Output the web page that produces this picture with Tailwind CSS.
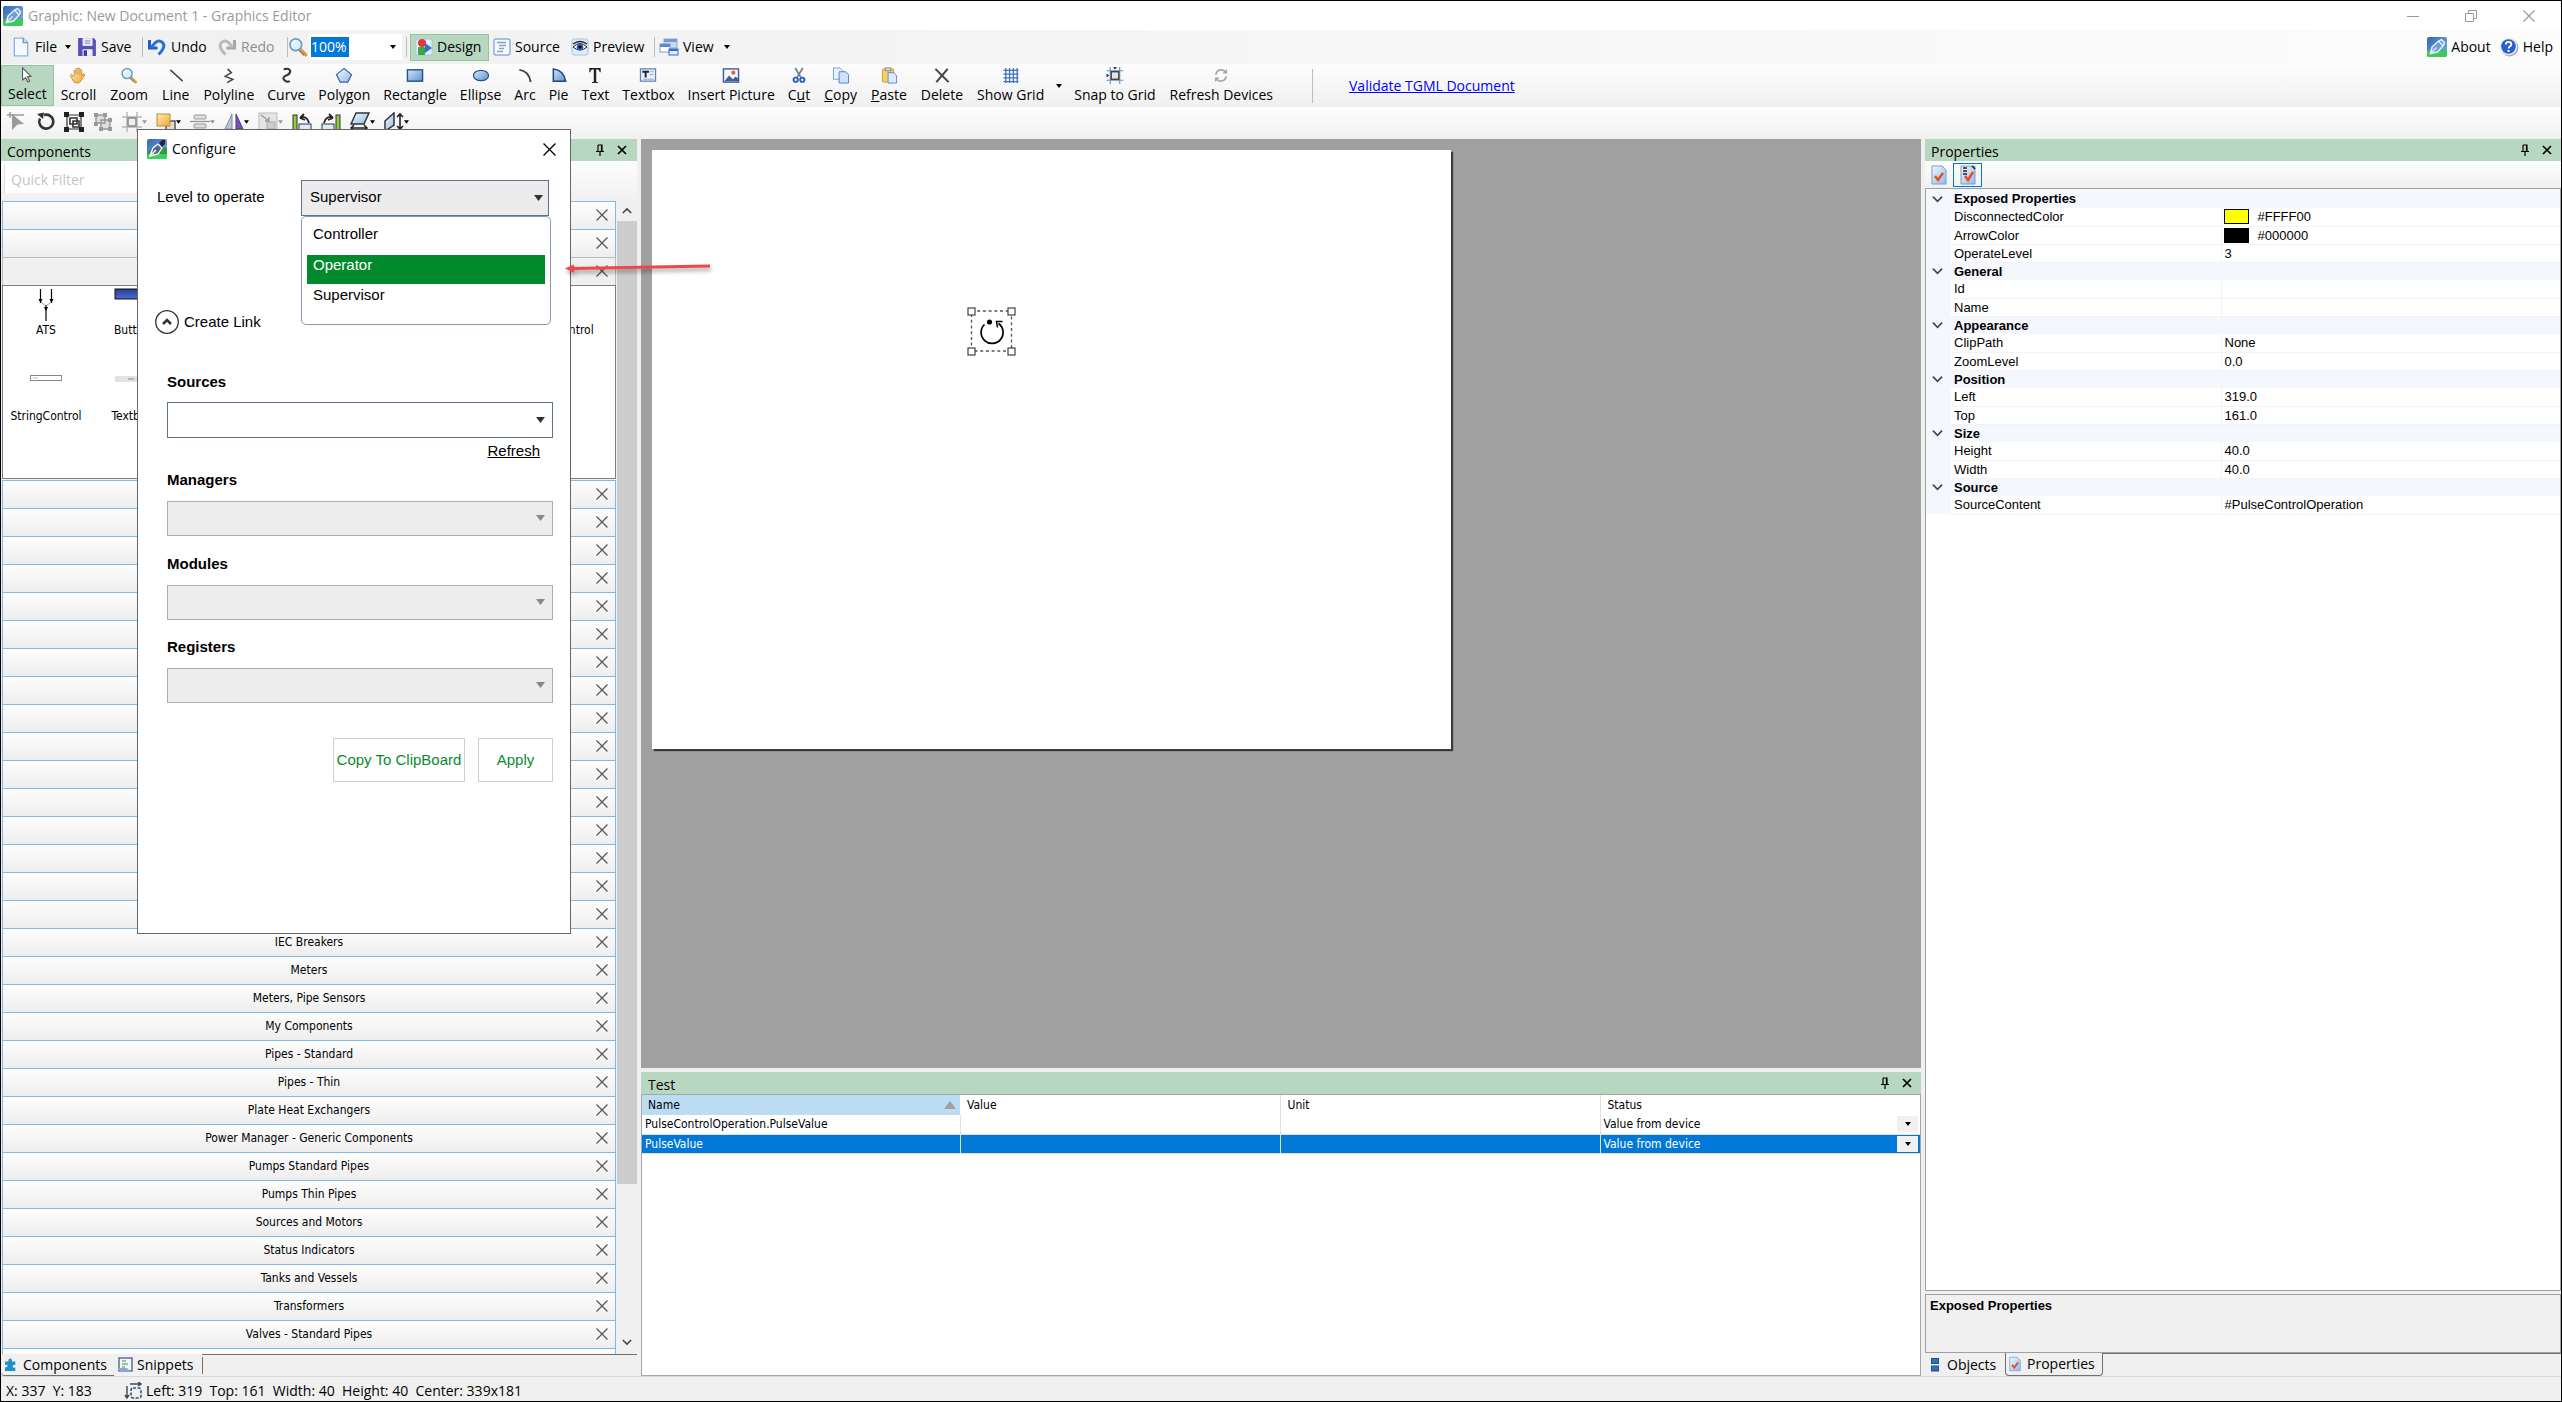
<!DOCTYPE html>
<html lang="en">
<head>
<meta charset="utf-8">
<title>Graphic: New Document 1 - Graphics Editor</title>
<script src="https://cdn.jsdelivr.net/npm/@tailwindcss/browser@4"></script>
</head>
<body class="h-screen flex flex-col border border-black bg-[#f0f0f0] font-['Open_Sans',sans-serif] text-sm leading-5 text-black overflow-hidden">

<svg class="absolute size-0" aria-hidden="true">
  <defs>
    <linearGradient id="gBlue" x1="0" y1="0" x2="1" y2="1"><stop offset="0" stop-color="#f2f9ff"/><stop offset="1" stop-color="#8db9ea"/></linearGradient>
    <linearGradient id="gSteel" x1="0" y1="0" x2="1" y2="1"><stop offset="0" stop-color="#d4e8fb"/><stop offset="1" stop-color="#5f90cc"/></linearGradient>
    <linearGradient id="gGold" x1="0" y1="0" x2="1" y2="1"><stop offset="0" stop-color="#ffedb0"/><stop offset="1" stop-color="#f0a63c"/></linearGradient>
    <linearGradient id="gSky" x1="0" y1="0" x2="1" y2="1"><stop offset="0" stop-color="#3567b8"/><stop offset="1" stop-color="#7fb0dc"/></linearGradient>
    <linearGradient id="gButton" x1="0" y1="0" x2="0" y2="1"><stop offset="0" stop-color="#27408f"/><stop offset="1" stop-color="#4a6bd0"/></linearGradient>
  </defs>
  <symbol id="app" viewBox="0 0 20 20"><rect width="20" height="20" rx="2" fill="url(#gSky)"/><path d="M0 14Q6 12 10 13.500T20 12V18a2 2 0 0 1-2 2H2a2 2 0 0 1-2-2z" fill="#3ccb5a"/><path d="M3.500 16.500l1.500-6.500 6.500-6 3-1.500 3 3-1 3-6 6.500z" fill="#6f9fd0" stroke="#e8f4fa" stroke-width="1.400"/><path d="M3.500 16.500l6-6M11.500 4l4.500 5" stroke="#e8f4fa" stroke-width="1.200"/></symbol>
  <symbol id="appDark" viewBox="0 0 20 20"><rect width="20" height="20" rx="2" fill="url(#gSky)"/><path d="M0 13Q8 8 20 9V18a2 2 0 0 1-2 2H2a2 2 0 0 1-2-2z" fill="#2f9b3c"/><path d="M0 15H20V18a2 2 0 0 1-2 2H2a2 2 0 0 1-2-2z" fill="#3ad35f"/><path d="M3 17l3-8 5-4 4 4-4 6z" fill="#4b6a85" stroke="#fff" stroke-width="1.300"/><path d="M12 4l3-3h3v4l-3 3z" fill="#1c2940"/><path d="M3 17l6-6" stroke="#fff" stroke-width="1.200"/></symbol>
  <symbol id="file" viewBox="0 0 18 18"><path d="M3 1h8l4 4v12H3z" fill="#f4f9ff" stroke="#8fb2e0" stroke-width="1.200"/><path d="M11 1v4h4" fill="#cfe0f7" stroke="#6b93cf" stroke-width="1.200"/></symbol>
  <symbol id="save" viewBox="0 0 18 18"><path d="M1 1h14l2 2v14H1z" fill="#5750b5"/><rect x="5" y="1" width="9" height="7" fill="#e9ecfa"/><path d="M7 3.500h5M7 5.500h5" stroke="#99a"/><rect x="5" y="11" width="9" height="6" fill="#eef1fb"/><rect x="6" y="12" width="3" height="5" fill="#413a9c"/></symbol>
  <symbol id="undo" viewBox="0 0 20 18"><path d="M2.500 2v8h8" fill="none" stroke="#1f5fc8" stroke-width="3"/><path d="M4 9.500L8.500 4.500Q12 1.500 15.500 4.500 19.500 9 11.500 16.500" fill="none" stroke="#2a6fd8" stroke-width="3"/></symbol>
  <symbol id="redo" viewBox="0 0 20 18"><path d="M17.500 2v8h-8" fill="none" stroke="#a6a6a6" stroke-width="3"/><path d="M16 9.500L11.500 4.500Q8 1.500 4.500 4.500.500 9 8.500 16.500" fill="none" stroke="#bababa" stroke-width="3"/></symbol>
  <symbol id="zoom" viewBox="0 0 18 18"><path d="M11 11l5 5" stroke="#d6a04c" stroke-width="3" stroke-linecap="round"/><path d="M10 12l4.500 4.500" stroke="#8a6a3c" stroke-width="1"/><circle cx="7" cy="7" r="5.300" fill="#dcf0ff" stroke="#6c9dc9" stroke-width="1.600"/><path d="M4 7q0-3 3-3" fill="none" stroke="#fff" stroke-width="1.500"/></symbol>
  <symbol id="design" viewBox="0 0 18 18"><rect x="1" y="1" width="16" height="16" rx="1" fill="#e6f1ff" stroke="#a5c2e8"/><circle cx="7" cy="5" r="4" fill="#e03a2c"/><rect x="3" y="9" width="7" height="8" rx="1" fill="#35a93a"/><path d="M10 5l7 5-7 5z" fill="#2d6fd6"/></symbol>
  <symbol id="source" viewBox="0 0 18 18"><rect x="1" y="1" width="16" height="16" rx="2" fill="#f5faff" stroke="#8fb0de" stroke-width="1.500"/><path d="M4 4.500h9M6 7.500h7M6 10.500h5M4 13.500h6" stroke="#8aa0c0" stroke-width="1.400"/></symbol>
  <symbol id="preview" viewBox="0 0 18 18"><rect x="1" y="1" width="16" height="16" rx="2" fill="#dfeafa" stroke="#aac3e6"/><path d="M2 9q7-7 14 0-7 6-14 0z" fill="#fff" stroke="#222"/><circle cx="9" cy="9" r="3.400" fill="#2d66b8"/><circle cx="9" cy="9" r="1.600" fill="#000"/><path d="M2 6q7-5 14 0" fill="none" stroke="#222" stroke-width="1.500"/></symbol>
  <symbol id="view" viewBox="0 0 20 18"><rect x="5" y="1" width="13" height="9" fill="#c8daf2" stroke="#8aa9d6"/><rect x="5" y="1" width="13" height="3" fill="#7b9bd0"/><rect x="1" y="6" width="10" height="8" fill="#fff" stroke="#7f9fd0"/><rect x="1" y="6" width="10" height="3" fill="#5b88cf"/><rect x="10" y="11" width="9" height="6" fill="#dfeafa" stroke="#3a6fc0"/><rect x="10" y="11" width="9" height="2" fill="#3a6fc0"/></symbol>
  <symbol id="help" viewBox="0 0 20 20"><circle cx="10.500" cy="10.500" r="9" fill="#a9a9a9"/><circle cx="9.500" cy="9.500" r="8.800" fill="#ececec"/><circle cx="9.500" cy="9.500" r="7.300" fill="#2960d0"/><path d="M6.800 7.500q.2-2.600 2.800-2.600t2.700 2.400q0 1.300-1.500 2.200-1.200.7-1.200 2M9.600 13v2" fill="none" stroke="#fff" stroke-width="1.900"/></symbol>
  <symbol id="select" viewBox="0 0 18 18"><path d="M4 1l9.500 9.500-4 .5 2.500 5-2 1-2.500-5L4 14.500z" fill="#fff" stroke="#555" stroke-width="1.200"/></symbol>
  <symbol id="hand" viewBox="0 0 18 18"><path d="M5 9V4q1-1.500 2 0V2q1-1.500 2 0V1.500q1-1 2 .5v1q1-1 2 .5V9l1.500-1.500q1.500-.5 1.500 1L12 15q-1 2-4 2-4 0-5-4L1 9q0-1.500 1.500-1L4 10z" fill="url(#gGold)" stroke="#c98a35"/><path d="M7 4v4M9 3v5M11 3v5" stroke="#c98a35" stroke-width=".8"/></symbol>
  <symbol id="line" viewBox="0 0 18 18"><path d="M3 3l13 12" stroke="#444" stroke-width="1.600"/></symbol>
  <symbol id="polyline" viewBox="0 0 18 18"><path d="M7.500 2L11.500 6 5 10l8 3-6 3.500" fill="none" stroke="#444" stroke-width="1.600"/></symbol>
  <symbol id="curve" viewBox="0 0 18 18"><path d="M6.500 2.500Q13 .5 13.500 4.500 13 8 8 9.500 4.500 12 8 14.500 10.500 16.500 13 15" fill="none" stroke="#333" stroke-width="2.200"/></symbol>
  <symbol id="polygon" viewBox="0 0 18 18"><path d="M9 1.500l8 6.500-4 8H5L1 8z" fill="url(#gBlue)" stroke="#33619d" stroke-width="1.200"/></symbol>
  <symbol id="rectangle" viewBox="0 0 18 18"><rect x="1" y="3" width="16" height="12" fill="url(#gSteel)" stroke="#27508c" stroke-width="1.500"/></symbol>
  <symbol id="ellipse" viewBox="0 0 18 18"><ellipse cx="9" cy="9" rx="8" ry="5.500" fill="url(#gSteel)" stroke="#27508c" stroke-width="1.300"/></symbol>
  <symbol id="arc" viewBox="0 0 18 18"><path d="M3 3q10 1 12 13" fill="none" stroke="#444" stroke-width="2"/></symbol>
  <symbol id="pie" viewBox="0 0 18 18"><path d="M3 2q11 1 13 13H3z" fill="url(#gSteel)" stroke="#1f4a85" stroke-width="1.600"/></symbol>
  <symbol id="textT" viewBox="0 0 18 18"><path d="M3 1h12v4.500h-1Q13.500 3 12 2.700h-1.700V15q0 1 1.700 1v1H6v-1q1.700 0 1.700-1V2.700H6Q4.500 3 4 5.500H3z" fill="#222"/></symbol>
  <symbol id="textbox" viewBox="0 0 18 18"><rect x="1" y="2" width="16" height="13" fill="#e6f0fb" stroke="#5c84b5" stroke-width="1.300"/><path d="M3 4h7v2H7.500v5h-2V6H3z" fill="#222"/><path d="M11 5h4M11 8h4M4 13h11" stroke="#8ea9c9"/></symbol>
  <symbol id="picture" viewBox="0 0 18 18"><rect x="1" y="2" width="16" height="14" fill="#f3f7fc" stroke="#3b5f93" stroke-width="1.500"/><path d="M2 15l5-6 4 4 3-3 3 3v2z" fill="#3c5f96"/><circle cx="11.500" cy="6" r="2.200" fill="#e8603a"/></symbol>
  <symbol id="cut" viewBox="0 0 18 18"><path d="M5 1l6 10M13 1L7 11" stroke="#6d7f96" stroke-width="1.800"/><circle cx="5.500" cy="13.500" r="2.300" fill="none" stroke="#2a5fb8" stroke-width="2"/><circle cx="12.500" cy="13.500" r="2.300" fill="none" stroke="#2a5fb8" stroke-width="2"/></symbol>
  <symbol id="copy" viewBox="0 0 18 18"><path d="M1 1h7l3 3v9H1z" fill="#eaf3ff" stroke="#6f9bdc"/><path d="M7 5h7l3 3v9H7z" fill="#cfe2fb" stroke="#4f82cf"/></symbol>
  <symbol id="paste" viewBox="0 0 18 18"><rect x="2" y="2" width="12" height="14" rx="1" fill="#f4cf63" stroke="#c89b31"/><rect x="5" y="1" width="6" height="3" fill="#ddd" stroke="#888"/><path d="M8 6h6l3 3v8H8z" fill="#dceafd" stroke="#5b88cf"/></symbol>
  <symbol id="delete" viewBox="0 0 18 18"><path d="M2 2l14 14M15 2L3 16" stroke="#444" stroke-width="2.200"/></symbol>
  <symbol id="grid" viewBox="0 0 18 18"><path d="M3.500 1v16M7.500 1v16M11.500 1v16M15.500 1v16M1 3.500h16M1 7.500h16M1 11.500h16M1 15.500h16" stroke="#3f74b8" stroke-width="1.400"/></symbol>
  <symbol id="snap" viewBox="0 0 18 18"><path d="M4 0v18M14 0v18M0 4h18M0 14h18" stroke="#6d93c8" stroke-width="1.200"/><rect x="5" y="5" width="8" height="8" fill="#e4e4e4" stroke="#444" stroke-width="1.500"/><path d="M7 0h4l-2 3zM0 7v4l3-2z" fill="#223a66"/></symbol>
  <symbol id="refresh" viewBox="0 0 18 18"><path d="M3.500 8q1-5 6-5 3 0 4.500 2.500M14.500 10q-1 5-6 5-3 0-4.500-2.500" fill="none" stroke="#a5a5a5" stroke-width="1.800"/><path d="M15.500 2v5h-5zM2.500 16v-5h5z" fill="#a5a5a5"/></symbol>
  <symbol id="node" viewBox="0 0 20 20"><path d="M6 2l12 10-6.500.500L6 18z" fill="#9a9a9a"/><path d="M1 3h17M4 0v6" stroke="#9a9a9a" stroke-width="1.500"/></symbol>
  <symbol id="rotate" viewBox="0 0 20 20"><path d="M5 6.500A7 7 0 1 0 9 3" fill="none" stroke="#333" stroke-width="2.600"/><path d="M2 2l7-1.500L8 7z" fill="#333"/></symbol>
  <symbol id="group" viewBox="0 0 20 20"><path d="M3 3h14v14H3z" fill="none" stroke="#333" stroke-width="1.200"/><path d="M6 6h7v6H6zM9 9h6v6H9z" fill="#fff" stroke="#333" stroke-width="1.600"/><path d="M0 0h5v5H0zM15 0h5v5h-5zM0 15h5v5H0zM15 15h5v5h-5z" fill="#222"/></symbol>
  <symbol id="ungroup" viewBox="0 0 20 20"><path d="M3 3h9v8H3zM8 8h9v9H8z" fill="#ddd" stroke="#999" stroke-width="1.400"/><path d="M1 1h4v4H1zM10 1h4v4h-4zM1 10h4v4H1zM15 6h4v4h-4zM6 15h4v4H6zM15 15h4v4h-4z" fill="#999"/></symbol>
  <symbol id="crop" viewBox="0 0 20 20"><path d="M5 0v20M15 0v20M0 5h20M0 15h20" stroke="#b5b5b5" stroke-width="1.400"/><rect x="6" y="6" width="8" height="8" fill="#eee" stroke="#888" stroke-width="1.500"/></symbol>
  <symbol id="order" viewBox="0 0 20 20"><path d="M10 9h9v9h-9z" fill="#dcdcdc" stroke="#555" stroke-width="1.500"/><rect x="1" y="2" width="13" height="12" fill="url(#gGold)" stroke="#c08a30"/></symbol>
  <symbol id="align" viewBox="0 0 20 20"><rect x="4" y="3" width="12" height="4" rx="1" fill="#ddd" stroke="#999"/><rect x="4" y="12" width="12" height="4" rx="1" fill="#ddd" stroke="#999"/><path d="M0 9.500h20" stroke="#999" stroke-width="1.400"/></symbol>
  <symbol id="mirror" viewBox="0 0 20 20"><path d="M8 2v15H1z" fill="#b9c6d6" stroke="#7e8c9e"/><path d="M12 2v15h7z" fill="#7153b8" stroke="#4d3a8a"/></symbol>
  <symbol id="resize" viewBox="0 0 20 20"><rect x="1" y="1" width="18" height="17" fill="#e4e4e4" stroke="#bbb"/><path d="M3 3l8 6M7 9h4V5" fill="none" stroke="#999" stroke-width="1.400"/><rect x="9" y="10" width="8" height="7" fill="#ccc" stroke="#aaa"/></symbol>
  <symbol id="rotL" viewBox="0 0 20 20"><rect x="1" y="3" width="4" height="15" fill="#8fca3c" stroke="#333"/><rect x="7" y="12" width="12" height="6" fill="#dcebfb" stroke="#333"/><path d="M8 6q7-3 9 5M8 6l4-4M8 6l5 2" fill="none" stroke="#222" stroke-width="1.800"/></symbol>
  <symbol id="rotR" viewBox="0 0 20 20"><rect x="15" y="3" width="4" height="15" fill="#8fca3c" stroke="#333"/><rect x="1" y="12" width="12" height="6" fill="#dcebfb" stroke="#333"/><path d="M12 6q-7-3-9 5M12 6L8 2M12 6L7 8" fill="none" stroke="#222" stroke-width="1.800"/></symbol>
  <symbol id="skewH" viewBox="0 0 20 20"><path d="M6 1h13l-5 11H1z" fill="url(#gBlue)" stroke="#333" stroke-width="1.500"/><path d="M1 16h16M4 13l-3 3 3 3M14 13l3 3-3 3" fill="none" stroke="#222" stroke-width="1.500"/></symbol>
  <symbol id="skewV" viewBox="0 0 20 20"><path d="M1 9l9-8v12l-9 6z" fill="url(#gBlue)" stroke="#333" stroke-width="1.500"/><path d="M16 2v15M13 5l3-3 3 3M13 14l3 3 3-3" fill="none" stroke="#222" stroke-width="1.600"/></symbol>
  <symbol id="caret" viewBox="0 0 6 4"><path d="M0 0h6L3 4z" fill="currentColor"/></symbol>
  <symbol id="pin" viewBox="0 0 10 12"><path d="M3 1h4v6M3 1v6M1 7.500h8M5 7v5M6.500 1v6" fill="none" stroke="#000" stroke-width="1.200"/></symbol>
  <symbol id="cross" viewBox="0 0 10 10"><path d="M1 1l8 8M9 1L1 9" stroke="currentColor" stroke-width="1.700"/></symbol>
  <symbol id="thin" viewBox="0 0 12 12"><path d="M.5.5l11 11M11.500.5l-11 11" stroke="currentColor" stroke-width="1.200"/></symbol>
  <symbol id="chevron" viewBox="0 0 12 8"><path d="M1 1.500l5 5 5-5" fill="none" stroke="#444" stroke-width="1.800"/></symbol>
  <symbol id="page" viewBox="0 0 16 20"><path d="M1 1h10l4 4v14H1z" fill="url(#gBlue)" stroke="#7f9ccc"/><path d="M4 11l3 4 5-7" fill="none" stroke="#e84c20" stroke-width="2.500"/></symbol>
  <symbol id="pageList" viewBox="0 0 16 20"><path d="M1 1h14v18H1z" fill="url(#gBlue)" stroke="#7f9ccc"/><path d="M3 3h4M3 6h4M3 9h4M12 1l3 3" stroke="#222" stroke-width="1.600"/><path d="M5 11l3 4 5-8" fill="none" stroke="#e84c20" stroke-width="2.500"/></symbol>
  <symbol id="puzzle" viewBox="0 0 14 16"><path d="M4 4V2q2-3 4 0v2h4v4q-3-1-3 1.500T12 11v4H0v-4q3 0 3-2T0 8V4z" fill="#1d8fc9"/></symbol>
  <symbol id="snippet" viewBox="0 0 16 16"><rect x="2" y="1" width="13" height="13" fill="#f2f6fc" stroke="#445c87" stroke-width="1.300"/><path d="M5 4h4M5 7h6M5 10h3" stroke="#4a8a4a" stroke-width="1.200"/><path d="M1 11h9l4 4H3z" fill="#8ea6cc"/></symbol>
  <symbol id="bounds" viewBox="0 0 18 18"><path d="M3 4v12M1 13l2 3 2-3M6 2h11M14 0l3 2-3 2" fill="none" stroke="#445" stroke-width="1.400"/><rect x="7" y="6" width="10" height="10" rx="2" fill="none" stroke="#35507f" stroke-width="1.600" stroke-dasharray="3 1.500"/></symbol>
  <symbol id="objects" viewBox="0 0 8 14"><rect x=".5" y=".5" width="7" height="5" fill="#2f72b8" stroke="#1f4f88"/><rect x=".5" y="8" width="7" height="5" fill="#2f72b8" stroke="#1f4f88"/></symbol>
</svg>

<header>
  <div class="h-[29px] pl-0.5 pr-[26px] flex items-center justify-between bg-white text-[#9a9a9a]">
    <div class="flex items-center gap-[5px]"><svg class="size-5"><use href="#app"/></svg><h1>Graphic: New Document 1 - Graphics Editor</h1></div>
    <div class="flex items-center gap-[46px]">
      <button aria-label="Minimize"><svg class="size-3" viewBox="0 0 12 12"><path d="M0 6.500h12" stroke="#999"/></svg></button>
      <button aria-label="Restore"><svg class="size-3" viewBox="0 0 12 12"><path d="M.5 3.500h8v8h-8zM3.500 3V.5h8v8H9" fill="none" stroke="#999"/></svg></button>
      <button aria-label="Close"><svg class="size-3"><use href="#thin"/></svg></button>
    </div>
  </div>

  <div class="h-[34px] pl-2.5 pr-2 flex items-center justify-between bg-linear-to-r from-[#f0f0f0] to-[#fcfcfc]">
    <div class="flex items-center">
      <button class="flex items-center gap-1 w-[66px]"><svg class="size-5"><use href="#file"/></svg>File<svg class="ml-auto mr-1.5 w-1.5 h-1"><use href="#caret"/></svg></button>
      <button class="flex items-center gap-1 w-[65px]"><svg class="size-5"><use href="#save"/></svg>Save</button>
      <div class="w-px h-5 bg-[#bdbdbd]"></div>
      <button class="flex items-center gap-1 w-[70px] pl-1"><svg class="size-5"><use href="#undo"/></svg>Undo</button>
      <button class="flex items-center gap-1 w-[74px] pl-1 text-[#8e8e8e]"><svg class="size-5"><use href="#redo"/></svg>Redo</button>
      <div class="w-px h-5 bg-[#bdbdbd]"></div>
      <label class="flex items-center gap-px w-[118px]"><svg class="size-5"><use href="#zoom"/></svg>
        <span class="flex items-center justify-between bg-white w-[93px] h-[26px] pl-0.5 pr-1.5"><input aria-label="Zoom level" value="100%" class="w-[38px] h-5 bg-[#0078d7] text-white outline-none"><svg class="w-1.5 h-1"><use href="#caret"/></svg></span></label>
      <div class="w-px h-5 bg-[#bdbdbd] mr-[3px]"></div>
      <button class="flex items-center gap-1 w-[79px] h-[27px] px-1 border border-[#8fc7a1] bg-[#b8d7c1]"><svg class="size-[18px]"><use href="#design"/></svg>Design</button>
      <button class="flex items-center gap-1 w-[78px] pl-1"><svg class="size-[18px]"><use href="#source"/></svg>Source</button>
      <button class="flex items-center gap-1 w-[87px] pl-1"><svg class="size-[18px]"><use href="#preview"/></svg>Preview</button>
      <div class="w-px h-5 bg-[#bdbdbd]"></div>
      <button class="flex items-center gap-1 pl-1"><svg class="size-5"><use href="#view"/></svg>View<svg class="ml-1.5 w-1.5 h-1"><use href="#caret"/></svg></button>
    </div>
    <div class="flex items-center gap-2">
      <button class="flex items-center gap-1"><svg class="size-5"><use href="#app"/></svg>About</button>
      <button class="flex items-center gap-1"><svg class="size-5"><use href="#help"/></svg>Help</button>
    </div>
  </div>

  <div class="h-[43px] flex items-center bg-linear-to-b from-[#fdfdfd] to-[#f0f0f0]">
    <div id="tools" class="flex items-center"></div>
    <div class="ml-8 mr-9 w-px h-[34px] bg-[#bdbdbd]"></div>
    <a href="#" class="text-[#0000ff] underline">Validate TGML Document</a>
  </div>

  <div id="edits" class="h-8 pl-[5px] pb-0.5 flex items-center gap-[9px] bg-linear-to-b from-[#fdfdfd] to-[#f0f0f0]"></div>
</header>

<main class="flex-1 min-h-0 flex gap-1">

  <aside class="w-[636px] shrink-0 flex flex-col min-h-0">
    <div class="h-[22px] shrink-0 pl-1.5 pr-2.5 flex items-center bg-[#b8d7c1]">
      <h2 class="grow pt-1">Components</h2>
      <button aria-label="Pin" class="mr-3"><svg class="w-2.5 h-3"><use href="#pin"/></svg></button>
      <button aria-label="Close"><svg class="size-2.5"><use href="#cross"/></svg></button>
    </div>
    <div class="h-10 shrink-0 p-1 pb-2 pl-[3px] bg-linear-to-b from-[#fdfdfd] to-[#f0f0f0]">
      <input aria-label="Quick Filter" placeholder="Quick Filter" class="w-[500px] h-full pl-1.5 border-l border-[#ddd] bg-white placeholder:text-[#c4c4c4]">
    </div>
    <div class="grow min-h-0 flex">
      <div id="list" class="w-0 grow pl-px flex flex-col overflow-hidden font-['DejaVu_Sans_Condensed','DejaVu_Sans',sans-serif] text-xs"></div>
      <div class="w-5 ml-px shrink-0 flex flex-col items-center">
        <svg class="my-1.5 w-2.5 h-2 rotate-180"><use href="#chevron"/></svg>
        <div class="w-full h-[963px] bg-[#cdcdcd]"></div>
        <svg class="mt-auto mb-2 w-2.5 h-2"><use href="#chevron"/></svg>
      </div>
    </div>
    <div class="h-[22px] shrink-0 flex">
      <button class="w-[113px] pl-1 flex items-center gap-1.5 border-b border-[#707070] rounded-bl-sm"><svg class="w-3 h-3.5"><use href="#puzzle"/></svg>Components</button>
      <button class="w-[88px] pl-[3px] flex items-center gap-1"><svg class="size-4"><use href="#snippet"/></svg>Snippets</button>
      <div class="grow border-t border-[#707070] pt-0.5"><div class="w-px h-[17px] bg-[#707070]"></div></div>
    </div>
  </aside>

  <section class="grow min-w-0 flex flex-col gap-1">
    <div class="grow bg-[#a0a0a0] pl-[11px] pt-[11px]">
      <svg class="w-[799px] h-[599px] bg-white shadow-[2px_2px_1px_#3a3a3a]" viewBox="0 0 799 599">
        <g fill="none" stroke="#555">
          <rect x="319.500" y="161" width="40" height="40" stroke-dasharray="3 2.700" stroke-width="1.300"/>
          <g fill="#fff" stroke="#444" stroke-width="1.200"><rect x="316" y="158" width="7" height="7"/><rect x="356" y="158" width="7" height="7"/><rect x="316" y="198" width="7" height="7"/><rect x="356" y="198" width="7" height="7"/></g>
          <path d="M332.500 174.500A11 11 0 1 0 346.500 173.500" stroke="#000" stroke-width="1.700"/>
          <path d="M350.500 171.500H344.500l1 6" stroke="#000" stroke-width="1.500"/>
        </g>
        <circle cx="337.500" cy="172" r="2.600"/>
      </svg>
    </div>
    <div class="h-[304px] shrink-0 flex flex-col">
      <div class="h-[22px] pl-[7px] pr-[9px] flex items-center bg-[#b8d7c1]">
        <h2 class="grow pt-1">Test</h2>
        <button aria-label="Pin" class="mr-3"><svg class="w-2.5 h-3"><use href="#pin"/></svg></button>
        <button aria-label="Close"><svg class="size-2.5"><use href="#cross"/></svg></button>
      </div>
      <div class="grow bg-white border border-[#a6a6ab] font-['DejaVu_Sans_Condensed','DejaVu_Sans',sans-serif] text-xs leading-[18px]">
        <table class="w-full table-fixed border-collapse">
          <colgroup><col class="w-[318px]"><col><col><col></colgroup>
          <thead><tr class="h-5 text-left">
            <th class="font-normal pl-1.5 bg-[#bcdcf4]"><span class="flex items-center justify-between pr-1">Name<svg class="w-3 h-2" viewBox="0 0 12 8"><path d="M0 8L6 0l6 8z" fill="#a0a0a0"/></svg></span></th>
            <th class="font-normal pl-[7px] border-r border-[#e0e0e0]">Value</th><th class="font-normal pl-[7px] border-r border-[#e0e0e0]">Unit</th><th class="font-normal pl-[7px]">Status</th></tr></thead>
          <tbody>
            <tr class="h-[19px] border-b border-[#e0e0e0]"><td class="pl-[3px] border-r border-[#e0e0e0]">PulseControlOperation.PulseValue</td><td class="border-r border-[#e0e0e0]"></td><td class="border-r border-[#e0e0e0]"></td><td class="pl-[3px]"><span class="flex items-center justify-between pr-0.5">Value from device<button aria-label="Choose status" class="w-[21px] h-4 bg-[#f0f0f0] flex items-center justify-center"><svg class="w-1.5 h-1"><use href="#caret"/></svg></button></span></td></tr>
            <tr class="h-[19px] border-b border-[#e0e0e0] bg-[#0078d7] text-white"><td class="pl-[3px] border-r border-[#e0e0e0]">PulseValue</td><td class="border-r border-[#e0e0e0]"></td><td class="border-r border-[#e0e0e0]"></td><td class="pl-[3px]"><span class="flex items-center justify-between pr-0.5">Value from device<button aria-label="Choose status" class="w-[21px] h-4 bg-[#f0f0f0] text-black flex items-center justify-center"><svg class="w-1.5 h-1"><use href="#caret"/></svg></button></span></td></tr>
          </tbody>
        </table>
      </div>
    </div>
  </section>

  <aside class="w-[636px] shrink-0 flex flex-col min-h-0">
    <div class="h-[22px] shrink-0 pl-1.5 pr-[9px] flex items-center bg-[#b8d7c1]">
      <h2 class="grow pt-1">Properties</h2>
      <button aria-label="Pin" class="mr-3"><svg class="w-2.5 h-3"><use href="#pin"/></svg></button>
      <button aria-label="Close"><svg class="size-2.5"><use href="#cross"/></svg></button>
    </div>
    <div class="h-[27px] shrink-0 pl-1.5 flex items-center gap-1.5 bg-linear-to-b from-[#fdfdfd] to-[#f0f0f0]">
      <button aria-label="All properties"><svg class="w-4 h-5"><use href="#page"/></svg></button>
      <button aria-label="Exposed properties" class="w-[29px] h-6 flex items-center justify-center border border-[#0078d7]"><svg class="w-4 h-5"><use href="#pageList"/></svg></button>
    </div>
    <div class="grow bg-white border border-[#a0a0a0] font-['Liberation_Sans',sans-serif] text-[13px] leading-[17px]">
      <table class="w-full table-fixed border-collapse"><colgroup><col class="w-[25px]"><col class="w-[270px]"><col></colgroup><tbody id="props"></tbody></table>
    </div>
    <div class="h-[59px] shrink-0 mt-[3px] pl-1 pt-px border border-[#a0a0a0] font-['Liberation_Sans',sans-serif] text-[13px] font-bold">Exposed Properties</div>
    <div class="h-[23px] shrink-0 flex">
      <button class="w-20 pl-1.5 flex items-center gap-2"><svg class="w-2 h-3.5"><use href="#objects"/></svg>Objects</button>
      <button class="w-[98px] pl-[3px] flex items-center gap-1.5 border border-t-0 border-[#707070] rounded-b-sm"><svg class="w-3 h-4"><use href="#page"/></svg>Properties</button>
      <div class="grow border-t border-[#707070]"></div>
    </div>
  </aside>
</main>

<footer class="h-[25px] pl-[5px] pt-1 flex items-center border-t border-[#d7d7d7]">
  <span class="w-[118px] whitespace-pre">X: 337  Y: 183</span>
  <svg class="size-[18px] mr-1"><use href="#bounds"/></svg>
  <span class="whitespace-pre">Left: 319  Top: 161  Width: 40  Height: 40  Center: 339x181</span>
</footer>

<div role="dialog" aria-labelledby="dlgTitle" class="absolute left-[137px] top-[129px] w-[434px] h-[805px] bg-white border border-[#666] font-['Liberation_Sans',sans-serif] text-[15px] flex flex-col">
  <div class="h-[38px] pl-[9px] pr-[14px] flex items-center gap-[5px] font-['Open_Sans',sans-serif] text-sm">
    <svg class="size-5"><use href="#appDark"/></svg><h2 id="dlgTitle" class="grow">Configure</h2>
    <button aria-label="Close"><svg class="w-[13px] h-[13px]"><use href="#thin"/></svg></button>
  </div>
  <div class="mt-3 pl-[19px] pr-[21px] flex items-center justify-between">
    <label for="level" class="pb-0.5">Level to operate</label>
    <div class="relative w-[248px]">
      <select id="level" class="appearance-none w-full h-9 pl-2 pb-0.5 border border-[#5f7388] bg-[#ececec] text-[15px]"><option>Supervisor</option><option>Controller</option><option>Operator</option></select>
      <svg class="absolute right-1.5 top-[15px] w-[9px] h-1.5 pointer-events-none text-[#333]"><use href="#caret"/></svg>
      <ul role="listbox" class="absolute left-0 top-9 w-[250px] h-[109px] pt-[7px] px-[5px] bg-white border border-[#8398ad] rounded-[5px] leading-5">
        <li role="option" class="h-[31px] pl-1.5">Controller</li>
        <li role="option" class="h-[29px] pl-1.5 bg-[#008a2b] text-white">Operator</li>
        <li role="option" class="pl-1.5 pt-px">Supervisor</li>
      </ul>
    </div>
  </div>
  <button class="mt-[94px] ml-[17px] flex items-center gap-[5px] self-start"><svg class="size-6" viewBox="0 0 24 24"><circle cx="12" cy="12" r="11.300" fill="none" stroke="#333" stroke-width="1.300"/><path d="M8 14l4-4 4 4" fill="none" stroke="#333" stroke-width="2.500"/></svg>Create Link</button>
  <div class="mt-[38px] px-[29px] pr-[17px] flex flex-col">
    <label for="sources" class="font-bold h-[30px] leading-5">Sources</label>
    <div class="relative"><select id="sources" class="appearance-none block w-full h-9 border border-[#5f7388] bg-white"></select><svg class="absolute right-2 top-[15px] w-[9px] h-1.5 pointer-events-none text-[#333]"><use href="#caret"/></svg></div>
    <a href="#" class="self-end mr-[13px] mt-[3px] leading-5 underline">Refresh</a>
    <label for="managers" class="mt-[9px] font-bold h-[31px] leading-5">Managers</label>
    <div class="relative"><select id="managers" disabled class="appearance-none block w-full h-[35px] border border-[#adadad] bg-[#ededed]"></select><svg class="absolute right-2 top-[14px] w-[9px] h-1.5 pointer-events-none text-[#888]"><use href="#caret"/></svg></div>
    <label for="modules" class="mt-[18px] font-bold h-[31px] leading-5">Modules</label>
    <div class="relative"><select id="modules" disabled class="appearance-none block w-full h-[35px] border border-[#adadad] bg-[#ededed]"></select><svg class="absolute right-2 top-[14px] w-[9px] h-1.5 pointer-events-none text-[#888]"><use href="#caret"/></svg></div>
    <label for="registers" class="mt-[17px] font-bold h-[31px] leading-5">Registers</label>
    <div class="relative"><select id="registers" disabled class="appearance-none block w-full h-[35px] border border-[#adadad] bg-[#ededed]"></select><svg class="absolute right-2 top-[14px] w-[9px] h-1.5 pointer-events-none text-[#888]"><use href="#caret"/></svg></div>
    <div class="mt-[35px] flex justify-end gap-[13px] text-[#0a8a2f]">
      <button class="w-[132px] h-11 border border-[#cfcfcf]">Copy To ClipBoard</button>
      <button class="w-[75px] h-11 border border-[#cfcfcf]">Apply</button>
    </div>
  </div>
</div>

<svg class="absolute left-[563px] top-[256px] w-[152px] h-6 drop-shadow-[1px_3px_2px_#00000066]" viewBox="0 0 152 24"><path d="M9 12.500L147 10" stroke="#f0474a" stroke-width="3"/><path d="M2 12.500l9-4v8z" fill="#f0474a"/></svg>

<script>
const use = (id, cls) => `<svg class="${cls}"><use href="#${id}"/></svg>`;

const tools = [['select','Select'],['hand','Scroll'],['zoom','Zoom'],['line','Line'],['polyline','Polyline'],['curve','Curve'],['polygon','Polygon'],['rectangle','Rectangle'],['ellipse','Ellipse'],['arc','Arc'],['pie','Pie'],['textT','Text'],['textbox','Textbox'],['picture','Insert Picture'],['cut','C<u>u</u>t'],['copy','<u>C</u>opy'],['paste','<u>P</u>aste'],['delete','Delete'],['grid','Show Grid','menu'],['snap','Snap to Grid'],['refresh','Refresh Devices']];
const toolBox = i => i === 0 ? 'h-[41px] px-1.5 flex flex-col items-center justify-between pt-px border border-[#8fc7a1] bg-[#b8d7c1]'
  : i > 4 && i < 15 ? 'h-[41px] pl-1.5 pr-[7px] flex flex-col items-center justify-between pt-0.5'
  : 'h-[41px] px-[7px] flex flex-col items-center justify-between pt-0.5';
document.getElementById('tools').innerHTML = tools.map(([id, label, menu], i) =>
  `<button class="${toolBox(i)}">${use(id, 'size-[18px]')}<span class="leading-[22px]">${label}</span></button>` +
  (menu ? `<button aria-label="Grid options" class="px-[5px]">${use('caret', 'w-1.5 h-1')}</button>` : '')).join('');

const edits = [['node'],['rotate'],['group'],['ungroup'],['crop','off'],['order','on'],['align','off'],['mirror','on'],['resize','off'],['rotL'],['rotR'],['skewH','on'],['skewV','on']];
document.getElementById('edits').innerHTML = edits.map(([id, menu]) =>
  `<button aria-label="${id}" class="flex items-center">${use(id, 'size-5')}${menu ? use('caret', menu === 'on' ? 'w-[5px] h-1 text-black' : 'w-[5px] h-1 text-[#999]') : ''}</button>`).join('');

const close = `<button aria-label="Remove" class="absolute right-[7px] top-[7px] text-[#555]">${use('thin', 'size-3')}</button>`;
const row = name => `<div class="relative h-7 shrink-0 border-t border-x border-[#7fb9e8] bg-linear-to-b from-[#fdfdfd] to-[#eeeeee]"><button aria-expanded="false" class="block w-full h-full pb-px text-center">${name}</button>${close}</div>`;
const cell = (art, name) => `<figure class="w-[86px] h-[86px] flex flex-col items-center"><svg class="w-[50px] h-9" viewBox="0 0 50 36">${art}</svg><figcaption class="leading-4">${name}</figcaption></figure>`;
const names = ['IEC Breakers','Meters','Meters, Pipe Sensors','My Components','Pipes - Standard','Pipes - Thin','Plate Heat Exchangers','Power Manager - Generic Components','Pumps Standard Pipes','Pumps Thin Pipes','Sources and Motors','Status Indicators','Tanks and Vessels','Transformers','Valves - Standard Pipes',''];
document.getElementById('list').innerHTML = row('') + row('') +
  `<div class="relative h-7 shrink-0 border-t border-x border-[#bbb] bg-[#f0f0f0]">${close}</div>` +
  `<div class="h-[194px] mb-px shrink-0 border border-[#7a7f87] bg-white flex flex-wrap content-start">` +
  cell('<path d="M19.500 3v14M30.500 3v14M25 19v16" stroke="#000" stroke-width="1.200"/><path d="M17.500 13h4l-2 4zM28.500 13h4l-2 4zM23 21h4l-2 4z"/><path d="M19.500 16l5.500 4 5.500-4" stroke="#555" fill="none" stroke-width=".6"/>', 'ATS') +
  cell('<rect x="8" y="3" width="34" height="10" fill="url(#gButton)" stroke="#111"/>', 'Button') +
  '<div class="w-[342px]"></div>' + cell('', 'PulseControl') +
  cell('<rect x="9.500" y="3.500" width="31" height="5" fill="#fff" stroke="#888"/><path d="M12 6h5" stroke="#bbb"/>', 'StringControl') +
  cell('<rect x="8" y="4" width="34" height="6" fill="#e2e2e2"/><path d="M21 7h6" stroke="#888"/>', 'Textbox') + `</div>` +
  Array(16).fill('').map(row).join('') + names.map(row).join('');

const props = [
  ['Exposed Properties', [['DisconnectedColor','#FFFF00','#FFFF00'],['ArrowColor','#000000','#000000'],['OperateLevel','3']]],
  ['General', [['Id',''],['Name','']]],
  ['Appearance', [['ClipPath','None'],['ZoomLevel','0.0']]],
  ['Position', [['Left','319.0'],['Top','161.0']]],
  ['Size', [['Height','40.0'],['Width','40.0']]],
  ['Source', [['SourceContent','#PulseControlOperation']]]];
document.getElementById('props').innerHTML = props.map(([g, rows], i) =>
  `<tr class="${i ? 'h-[18px] bg-[#f4f7fc]' : 'h-[19px] bg-[#f4f7fc]'}"><td class="pl-1.5">${use('chevron', 'w-[11px] h-2')}</td><th colspan="2" class="text-left pl-[3px] font-bold">${g}</th></tr>` +
  rows.map(([k, v, c]) => `<tr class="h-[18px]"><td class="bg-[#f4f7fc]"></td><td class="pl-[3px] border-b border-r border-[#f0f3f8]">${k}</td><td class="pl-[3px] border-b border-[#f0f3f8]">${c ? `<span class="flex items-center gap-[9px] -ml-px"><i class="w-[25px] h-[15px] border border-black" style="background:${c}"></i>${v}</span>` : v}</td></tr>`).join('')).join('');
</script>
</body>
</html>
